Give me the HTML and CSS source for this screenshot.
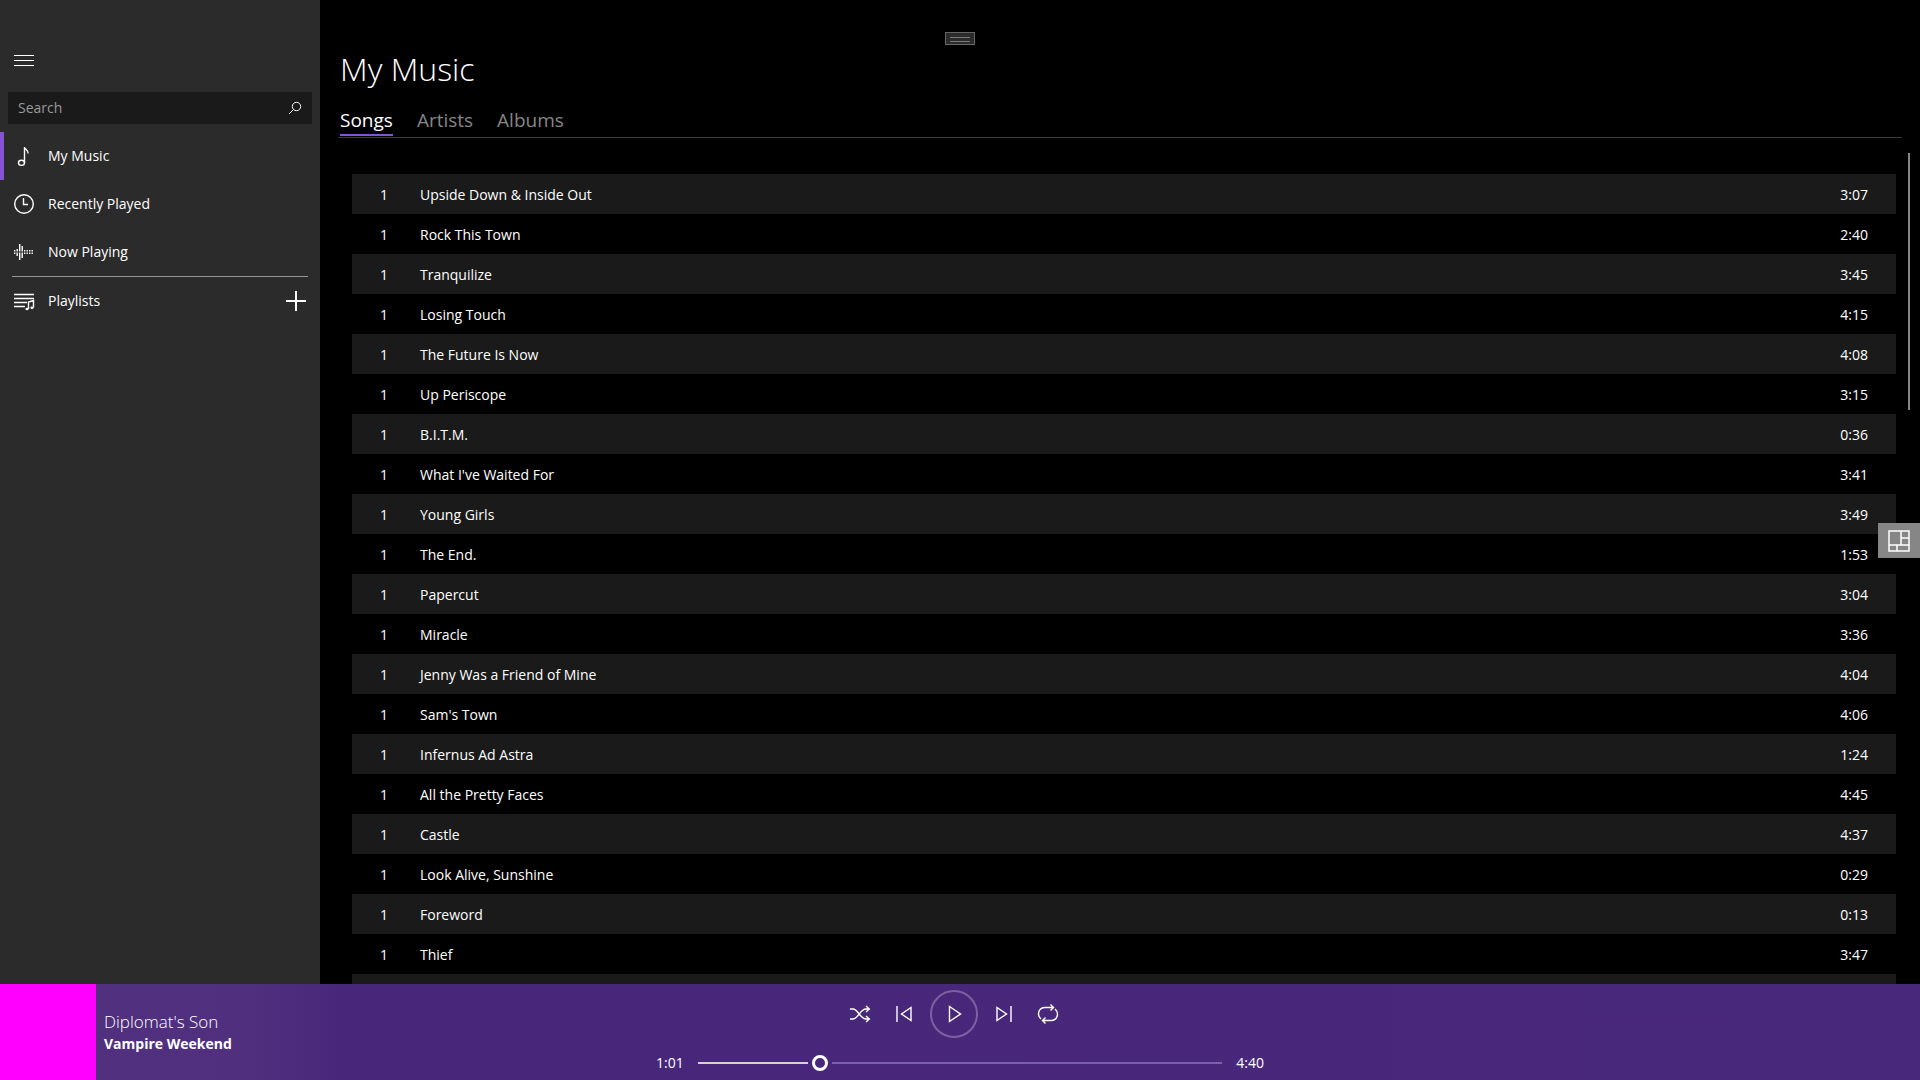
FILE: index.html
```html
<!DOCTYPE html>
<html lang="en">
<head>
    <meta charset="UTF-8">
    <meta name="viewport" content="width=device-width, initial-scale=1.0">
    <title>My Music</title>
    <link rel="stylesheet" href="styles.css">
</head>
<body>
    <div class="shell">
        <aside class="sidebar">
            <button class="menu-button" type="button" aria-label="Menu">
                <svg class="icon" viewBox="0 0 20 20" shape-rendering="crispEdges"><path d="M0 5.500h20M0 10.500h20M0 15.500h20"/></svg>
            </button>

            <form class="search">
                <input type="text" placeholder="Search" aria-label="Search">
                <button type="submit" aria-label="Find">
                    <svg class="icon-small" viewBox="0 0 14 14"><circle cx="8.5" cy="5.5" r="4.2"/><path d="M5.5 8.5L1 13"/></svg>
                </button>
            </form>

            <nav>
                <a href="#music" class="nav-item active">
                    <svg class="icon" viewBox="0 0 20 20"><ellipse cx="7.5" cy="16.800" rx="3" ry="2.600"/><path d="M10.500 17V1c.3 2.500 4 3 3.600 6.500"/></svg>
                    My Music
                </a>
                <a href="#recent" class="nav-item">
                    <svg class="icon" viewBox="0 0 20 20"><circle cx="10" cy="10" r="9.300"/><path d="M9.500 4v6.500H14"/></svg>
                    Recently Played
                </a>
                <a href="#playing" class="nav-item">
                    <svg class="icon wave" viewBox="0 0 20 20"><path d="M.7 8v4M3.200 7v7M5.700 2v16M8.200 4v12M10.700 8v4M13.200 8v4M15.700 8v4M18.200 8v4"/><path class="axis" d="M0 10h20"/></svg>
                    Now Playing
                </a>
                <div class="playlists">
                    <a href="#playlists" class="nav-item">
                        <svg class="icon" viewBox="0 0 20 20"><path d="M0 3.500h20M0 7.500h20M0 11.500h13M0 15.500h11M14.500 18v-7l5-1.500v7"/><ellipse class="solid" cx="13" cy="18" rx="1.600" ry="1.200"/><ellipse class="solid" cx="18" cy="16.800" rx="1.600" ry="1.200"/></svg>
                        Playlists
                    </a>
                    <button class="add-button" type="button" aria-label="New playlist">
                        <svg class="icon" viewBox="0 0 20 20" shape-rendering="crispEdges"><path d="M10 0v20M0 10h20"/></svg>
                    </button>
                </div>
            </nav>
        </aside>

        <main class="content">
            <h1>My Music</h1>
            <div class="tabs">
                <button type="button" class="tab selected">Songs</button>
                <button type="button" class="tab">Artists</button>
                <button type="button" class="tab">Albums</button>
            </div>

            <table class="songs">
                <tbody>
                    <tr><td class="track">1</td><td>Upside Down &amp; Inside Out</td><td class="time">3:07</td></tr>
                    <tr><td class="track">1</td><td>Rock This Town</td><td class="time">2:40</td></tr>
                    <tr><td class="track">1</td><td>Tranquilize</td><td class="time">3:45</td></tr>
                    <tr><td class="track">1</td><td>Losing Touch</td><td class="time">4:15</td></tr>
                    <tr><td class="track">1</td><td>The Future Is Now</td><td class="time">4:08</td></tr>
                    <tr><td class="track">1</td><td>Up Periscope</td><td class="time">3:15</td></tr>
                    <tr><td class="track">1</td><td>B.I.T.M.</td><td class="time">0:36</td></tr>
                    <tr><td class="track">1</td><td>What I've Waited For</td><td class="time">3:41</td></tr>
                    <tr><td class="track">1</td><td>Young Girls</td><td class="time">3:49</td></tr>
                    <tr><td class="track">1</td><td>The End.</td><td class="time">1:53</td></tr>
                    <tr><td class="track">1</td><td>Papercut</td><td class="time">3:04</td></tr>
                    <tr><td class="track">1</td><td>Miracle</td><td class="time">3:36</td></tr>
                    <tr><td class="track">1</td><td>Jenny Was a Friend of Mine</td><td class="time">4:04</td></tr>
                    <tr><td class="track">1</td><td>Sam's Town</td><td class="time">4:06</td></tr>
                    <tr><td class="track">1</td><td>Infernus Ad Astra</td><td class="time">1:24</td></tr>
                    <tr><td class="track">1</td><td>All the Pretty Faces</td><td class="time">4:45</td></tr>
                    <tr><td class="track">1</td><td>Castle</td><td class="time">4:37</td></tr>
                    <tr><td class="track">1</td><td>Look Alive, Sunshine</td><td class="time">0:29</td></tr>
                    <tr><td class="track">1</td><td>Foreword</td><td class="time">0:13</td></tr>
                    <tr><td class="track">1</td><td>Thief</td><td class="time">3:47</td></tr>
                    <tr><td></td><td></td><td></td></tr>
                </tbody>
            </table>
            <div class="scroll-thumb"></div>
        </main>
    </div>

    <footer class="player">
        <div class="current">
            <div class="cover"></div>
            <div>
                <div class="song-name">Diplomat's Son</div>
                <div class="song-artist">Vampire Weekend</div>
            </div>
        </div>

        <div class="transport">
            <div class="controls">
                <button type="button" aria-label="Shuffle">
                    <svg class="icon" viewBox="0 0 20 20"><path d="M0 5h3c5 0 7 10 13 10h3M0 15h3c5 0 7-10 13-10h3M16 2l3.300 3L16 8M16 12l3.300 3-3.300 3"/></svg>
                </button>
                <button type="button" aria-label="Previous">
                    <svg class="icon" viewBox="0 0 20 20"><path d="M3 2v16M17 3.500v13L7.500 10z"/></svg>
                </button>
                <button type="button" class="play" aria-label="Play">
                    <svg class="icon" viewBox="0 0 20 20"><path d="M5.500 2.500v15L16.500 10z"/></svg>
                </button>
                <button type="button" aria-label="Next">
                    <svg class="icon" viewBox="0 0 20 20"><path d="M17 2v16M3 3.500v13L12.500 10z"/></svg>
                </button>
                <button type="button" aria-label="Repeat">
                    <svg class="icon" viewBox="0 0 20 20"><path d="M3 15C-1.500 11 .5 3.500 7 3.500h8.500M12.500.5l3 3-3 3M17 5c4.500 4 2.500 11.500-4 11.500H4.500M7.500 13.500l-3 3 3 3"/></svg>
                </button>
            </div>
            <div class="seek">
                <span>1:01</span>
                <input type="range" min="0" max="280" value="63" aria-label="Position">
                <span>4:40</span>
            </div>
        </div>
    </footer>

    <!-- floating overlays -->
    <div class="grip"></div>
    <button class="tiles-button" type="button" aria-label="Layout">
        <svg viewBox="0 0 22 22"><path d="M1 1h20v20H1zM13 1v14M1 15h20M13 8h8M9 15v6"/></svg>
    </button>
</body>
</html>
```

FILE: styles.css
```css
* {
    box-sizing: border-box;
}
body {
    margin: 0;
    height: 100vh;
    display: flex;
    flex-direction: column;
    overflow: hidden;
    background-color: #000;
    color: #fff;
    font-family: "Open Sans", "Noto Sans", sans-serif;
    font-size: 14px;
    line-height: 20px;
}
button {
    display: flex;
    align-items: center;
    justify-content: center;
    padding: 0;
    border: none;
    background: none;
    color: inherit;
    font: inherit;
}
svg {
    display: block;
    flex: none;
    fill: none;
    stroke: #fff;
}
.icon {
    width: 20px;
    height: 20px;
    overflow: visible;
    stroke-width: 1.4;
}
.shell {
    flex: 1;
    min-height: 0;
    display: flex;
}

/* sidebar */
.sidebar {
    width: 320px;
    flex: none;
    padding-top: 36px;
    background-color: #2b2b2b;
}
.menu-button {
    width: 48px;
    height: 48px;
}
.menu-button .icon {
    stroke-width: 1;
}
.search {
    display: flex;
    height: 32px;
    margin: 8px;
    background-color: #1a1a1a;
}
.search input {
    flex: 1;
    min-width: 0;
    padding: 0 10px;
    border: none;
    background: none;
    color: #fff;
    font: inherit;
    outline: none;
}
.search input::placeholder {
    color: #999;
}
.search button {
    width: 34px;
}
.icon-small {
    width: 14px;
    height: 14px;
}
.nav-item {
    display: flex;
    align-items: center;
    gap: 14px;
    height: 48px;
    padding-left: 14px;
    color: #fff;
    text-decoration: none;
}
.nav-item.active {
    padding-left: 10px;
    border-left: 4px solid #8552d6;
}
.wave .axis {
    stroke: #2b2b2b;
    stroke-width: 1;
}
.solid {
    fill: #fff;
    stroke: none;
}
.playlists {
    display: flex;
    justify-content: space-between;
    margin: 0 12px;
    border-top: 1px solid #959595;
}
.playlists .nav-item {
    padding-left: 2px;
}
.add-button {
    width: 24px;
}
.add-button .icon {
    stroke-width: 2;
}

/* library */
.content {
    position: relative;
    flex: 1;
    min-width: 0;
    padding: 48px 18px 0;
    overflow: hidden;
}
h1 {
    margin: 0 2px;
    font-size: 32px;
    line-height: 42px;
    font-weight: 300;
}
.tabs {
    display: flex;
    gap: 24px;
    height: 48px;
    padding: 14px 2px 0;
    border-bottom: 1px solid #3c3c3c;
}
.tab {
    height: 32px;
    padding-top: 2px;
    border-bottom: 2px solid transparent;
    color: #868686;
    font-size: 19px;
    line-height: 24px;
}
.tab.selected {
    color: #fff;
    border-bottom-color: #8552d6;
}
.songs {
    width: calc(100% - 20px);
    margin: 36px 6px 0 14px;
    border-collapse: collapse;
}
.songs tr {
    height: 40px;
}
.songs tr:nth-child(odd) {
    background-color: #1a1a1a;
}
.songs td {
    padding: 2px 0 0;
}
.songs .track {
    width: 68px;
    padding-left: 28px;
}
.songs .time {
    width: 80px;
    padding-right: 28px;
    text-align: right;
}
.scroll-thumb {
    position: absolute;
    top: 153px;
    right: 10px;
    width: 2px;
    height: 257px;
    background-color: #868686;
}

/* player bar */
.player {
    display: grid;
    grid-template-columns: 1fr 608px 1fr;
    grid-template-rows: 96px;
    height: 96px;
    background: linear-gradient(90deg, #50307f 0, #4f2f7e 13%, #48277a 18%, #48287a 100%);
}
.current {
    display: flex;
    align-items: center;
    gap: 8px;
}
.cover {
    width: 96px;
    height: 96px;
    background-color: #f0f;
}
.song-name {
    font-size: 17px;
    line-height: 24px;
    font-weight: 300;
}
.song-artist {
    font-weight: 700;
}
.transport {
    display: flex;
    flex-direction: column;
    padding-top: 6px;
}
.controls {
    display: flex;
    align-items: center;
    justify-content: center;
    gap: 8px;
    padding-right: 12px;
}
.controls button {
    width: 36px;
    height: 48px;
}
.controls .play {
    width: 48px;
    border: 2px solid #7c61a1;
    border-radius: 50%;
}
.seek {
    display: flex;
    align-items: center;
    gap: 14px;
    height: 34px;
    margin-top: 8px;
}
.seek input {
    flex: 1;
    min-width: 0;
    height: 24px;
    margin: 0;
    background: none;
    appearance: none;
}
.seek input::-webkit-slider-runnable-track {
    height: 2px;
    background: linear-gradient(90deg, #d5d2d0 23%, #7c61a1 23%);
}
.seek input::-webkit-slider-thumb {
    width: 16px;
    height: 16px;
    margin-top: -7px;
    border: 3px solid #fff;
    border-radius: 50%;
    background-color: #48287a;
    box-shadow: 0 0 0 4px #48287a;
    appearance: none;
}

/* overlays */
.grip {
    position: absolute;
    top: 32px;
    left: calc(50% - 15px);
    width: 30px;
    height: 13px;
    padding: 4px;
    border: 1px solid #666;
    background-color: #2b2b2b;
}
.grip::before {
    content: "";
    display: block;
    height: 3px;
    border-top: 1px solid #777;
    border-bottom: 1px solid #777;
}
.tiles-button {
    position: absolute;
    top: 523px;
    right: 0;
    width: 42px;
    height: 35px;
    background-color: #868686;
}
.tiles-button svg {
    width: 22px;
    height: 22px;
    stroke-width: 1.5;
}
```
